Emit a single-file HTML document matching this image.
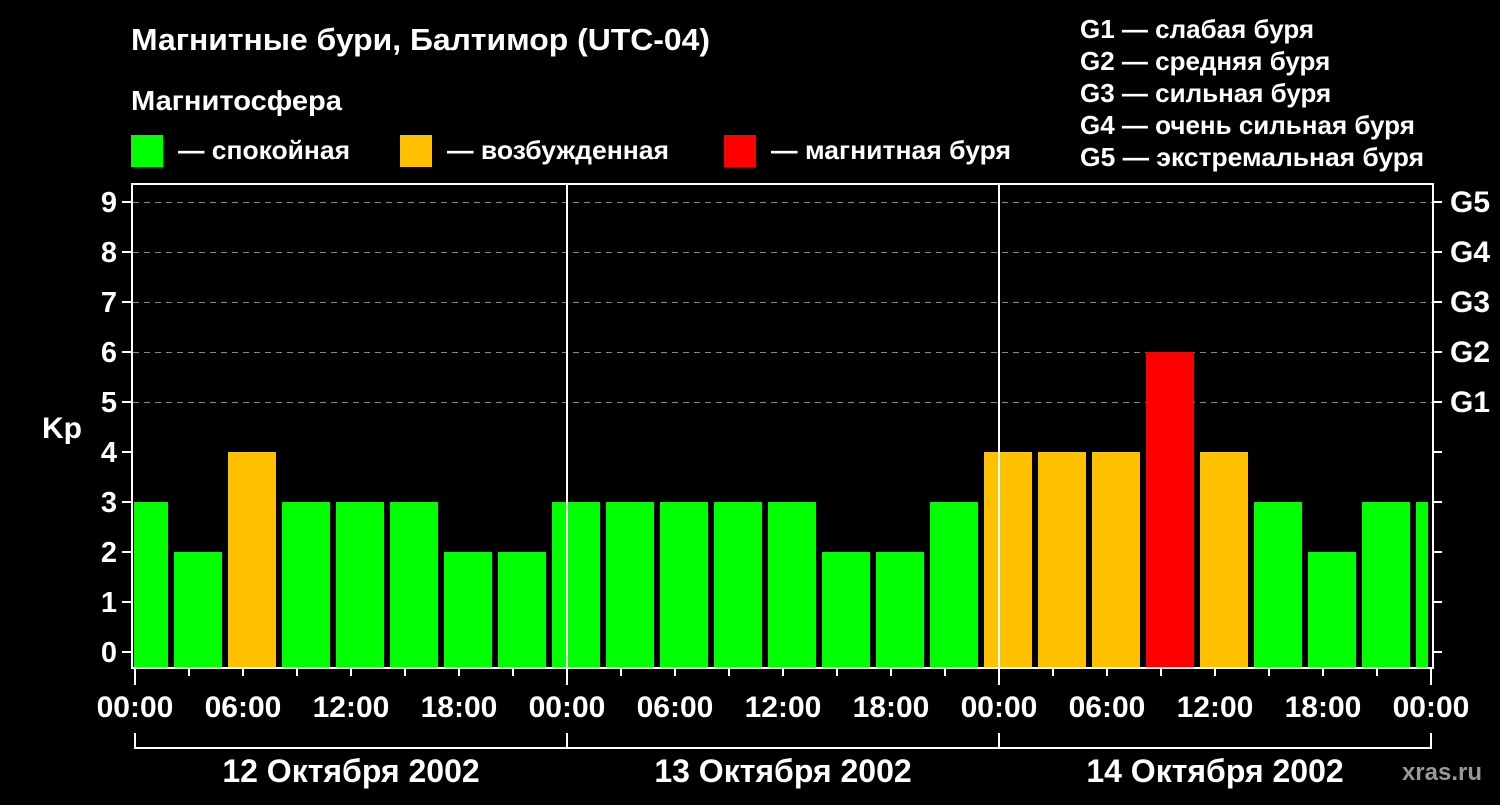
<!DOCTYPE html>
<html><head><meta charset="utf-8"><style>
body{margin:0;background:#000;width:1500px;height:800px;overflow:hidden}
svg text{font-family:"Liberation Sans",sans-serif;font-weight:bold;fill:#fff}
</style></head><body>
<svg width="1500" height="800" xmlns="http://www.w3.org/2000/svg">
<text x="131" y="50" font-size="31" textLength="579" lengthAdjust="spacingAndGlyphs">Магнитные бури, Балтимор (UTC-04)</text>
<text x="131" y="110" font-size="28" textLength="211" lengthAdjust="spacingAndGlyphs">Магнитосфера</text>
<rect x="131" y="135" width="32" height="32" fill="#00ff00"/>
<text x="178" y="159" font-size="26" textLength="172" lengthAdjust="spacingAndGlyphs">— спокойная</text>
<rect x="400" y="135" width="32" height="32" fill="#ffc000"/>
<text x="447" y="159" font-size="26" textLength="222" lengthAdjust="spacingAndGlyphs">— возбужденная</text>
<rect x="724" y="135" width="32" height="32" fill="#ff0000"/>
<text x="771" y="159" font-size="26" textLength="240" lengthAdjust="spacingAndGlyphs">— магнитная буря</text>
<g font-size="26">
<text x="1080" y="38">G1 — слабая буря</text>
<text x="1080" y="70">G2 — средняя буря</text>
<text x="1080" y="102">G3 — сильная буря</text>
<text x="1080" y="134">G4 — очень сильная буря</text>
<text x="1080" y="166" textLength="344" lengthAdjust="spacingAndGlyphs">G5 — экстремальная буря</text>
</g>
<g stroke="#888" stroke-dasharray="6,5" stroke-width="1">
<line x1="133" x2="1432" y1="202.5" y2="202.5"/>
<line x1="133" x2="1432" y1="252.5" y2="252.5"/>
<line x1="133" x2="1432" y1="302.5" y2="302.5"/>
<line x1="133" x2="1432" y1="352.5" y2="352.5"/>
<line x1="133" x2="1432" y1="402.5" y2="402.5"/>
</g>
<g id="bars"></g>
<g stroke="#fff" stroke-width="2" fill="none">
<rect x="132" y="184" width="1301" height="484"/>
<line x1="567" y1="184" x2="567" y2="668"/>
<line x1="999" y1="184" x2="999" y2="668"/>
<path d="M135 733V748H1431V733M567 733V748M999 733V748"/>
</g>
<g stroke="#fff" stroke-width="2" id="ticks"></g>
<g font-size="29" text-anchor="end" id="ylab"></g>
<text x="42" y="438" font-size="30">Kp</text>
<g font-size="30">
<text x="1450" y="212">G5</text><text x="1450" y="262">G4</text><text x="1450" y="312">G3</text><text x="1450" y="362">G2</text><text x="1450" y="412">G1</text>
</g>
<g font-size="30" text-anchor="middle" id="xlab"></g>
<g font-size="32" text-anchor="middle">
<text x="351" y="782">12 Октября 2002</text>
<text x="783" y="782">13 Октября 2002</text>
<text x="1215" y="782">14 Октября 2002</text>
</g>
<text x="1482" y="780" font-size="24" text-anchor="end" style="fill:#999">xras.ru</text>
</svg>
<script>
var ns="http://www.w3.org/2000/svg";
function el(p,t,a,txt){var e=document.createElementNS(ns,t);for(var k in a)e.setAttribute(k,a[k]);if(txt)e.textContent=txt;document.getElementById(p).appendChild(e);}
var v=[3,2,4,3,3,3,2,2,3,3,3,3,3,2,2,3,4,4,4,6,4,3,2,3,3];
v.forEach(function(x,k){var x0=120+54*k,x1=x0+48;if(x0<134)x0=134;if(x1>1428)x1=1428;
var c=x>=5?"#ff0000":x==4?"#ffc000":"#00ff00";el("bars","rect",{x:x0,y:652-50*x,width:x1-x0,height:668-(652-50*x),fill:c});});
for(var i=0;i<=9;i++){var y=652-50*i;el("ticks","line",{x1:122,x2:132,y1:y,y2:y});el("ticks","line",{x1:1433,x2:1442,y1:y,y2:y});el("ylab","text",{x:117,y:y+10},String(i));}
var L=["00:00","06:00","12:00","18:00"];
for(var h=0;h<=72;h+=3){var x=135+18*h;el("ticks","line",{x1:x,x2:x,y1:668,y2:h%24==0?685:676});
if(h%6==0)el("xlab","text",{x:x,y:717},L[(h%24)/6]);}
</script>
</body></html>
